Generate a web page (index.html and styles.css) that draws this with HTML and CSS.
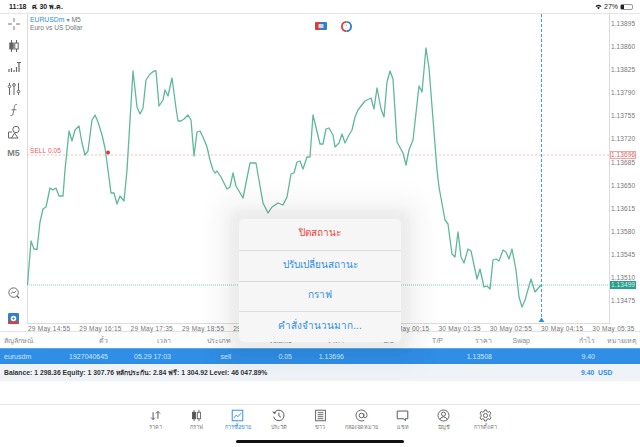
FILE: index.html
```html
<!DOCTYPE html>
<html lang="th">
<head>
<meta charset="utf-8">
<title>EURUSDm M5</title>
<link rel="stylesheet" href="styles.css">
</head>
<body>
<div class="app">
  <header class="status">
    <span class="status-time">11:18</span>
    <span class="status-date">ศ. 30 พ.ค.</span>
    <span class="status-right">
      <svg class="wifi" viewBox="0 0 8 6"><path d="M0.5 2Q4-1 7.500 2L6.500 3Q4 1 1.500 3ZM2.300 3.800Q4 2.400 5.700 3.800L4 5.500Z" fill="#222"/></svg>
      <span>27%</span>
      <span class="battery"><span class="battery-level"></span></span>
    </span>
  </header>

  <section class="workspace">
    <aside class="tools">
      <svg class="tool" viewBox="0 0 14 14" fill="none" stroke="#777" stroke-width="1"><path d="M7 1V5M7 9V13M1 7H5M9 7H13"/></svg>
      <svg class="tool" viewBox="0 0 14 14" fill="none" stroke="#666" stroke-width="1"><path d="M4.500 1V13M9.500 1V13"/><rect x="2.800" y="4" width="3.400" height="6" fill="#666"/><rect x="7.800" y="4" width="3.400" height="6" fill="#fff"/></svg>
      <svg class="tool" viewBox="0 0 14 14" fill="none" stroke="#666" stroke-width="1.200"><path d="M2 12V9M4.500 12V8M7 12V10M9.500 12V7M12 12V5M10 2.500H14M12 2.500V5"/></svg>
      <svg class="tool" viewBox="0 0 14 14" fill="none" stroke="#666" stroke-width="1"><path d="M2.500 1V13M7 1V13M11.500 1V13"/><circle cx="2.500" cy="4.500" r="1.300" fill="#fff"/><circle cx="7" cy="3" r="1.300" fill="#fff"/><circle cx="11.500" cy="9.500" r="1.300" fill="#fff"/></svg>
      <svg class="tool" viewBox="0 0 14 14" fill="none" stroke="#777" stroke-width="1"><path d="M10 1.500C7.500 1 7.500 3 7 6L6 11C5.700 12.800 4.500 13 3.500 12.500M4.500 6.800H9.500"/></svg>
      <svg class="tool" viewBox="0 0 14 14" fill="none" stroke="#666" stroke-width="1"><circle cx="9" cy="4.500" r="3.200"/><path d="M5 7H1.500V13H5M7.500 8L4.500 13H11Z"/></svg>
      <span class="tool-label">M5</span>
      <span class="tools-gap"></span>
      <svg class="tool-search" viewBox="0 0 14 14" fill="none" stroke="#555" stroke-width="1"><circle cx="6.500" cy="6.500" r="5.500"/><path d="M10.500 10.500L13 13" stroke-width="1.400"/><path d="M3.500 8L5.500 5.500L7 7L9.500 4.500" stroke-width=".9"/></svg>
      <svg class="tool-logo" viewBox="0 0 12 12"><rect width="12" height="12" rx="1.500" fill="#2f7fd0"/><path d="M0 9H3L6 6.500L9 9H12V10.500Q12 12 10.500 12H1.500Q0 12 0 10.500Z" fill="#d9403a"/><circle cx="6" cy="6" r="3" fill="#fff"/><path d="M6 4.500V7.500M4.500 6H7.500" stroke="#2f7fd0" stroke-width=".8"/></svg>
    </aside>

    <div class="chart">
      <div class="plot">
        <svg class="plot-svg" viewBox="27 14 583 310" preserveAspectRatio="none">
          <line class="sell-line" x1="27" y1="155" x2="609" y2="155"/>
          <line class="bid-line" x1="27" y1="285" x2="609" y2="285"/>
          <line class="cursor-line" x1="541.500" y1="14" x2="541.500" y2="322"/>
          <polyline class="price-line" points="27.500,285 31,241 34,249 37,249.500 40,222 43,209 46,207 50,188 53,190 56,188 59,196 63,196 65,170 69,131 72,141 75,130 79,126 82,143 85,155 88,151 92,120 95,115 98,122 102,135 105,148 108,170 111,193 114,193 117,204 120,196 124,201 127,170 133,71 137,107 140,114 143,108 146,80 150,74 154,71 156,71 159,106 163,100 165,90 168,96 172,78 176,108 178,121 181,121 184,119 188,115 191,120 194,156 197,132 200,131 203,137 207,147 210,160 213,170 215,173 217,171 221,177 227,189 230,187 233,173 236,186 243,198 250,163 253,163 256,163 263,203 268,213 272,207 278,203 283,205 287,197 291,174 294,173 297,162 300,161 303,169 307,157 310,157 313,115 320,144 323,144 326,129 329,128 333,135 335,147 339,143 342,134 345,143 349,135 352,130 355,117 358,110 365,101 371,98 374,109 377,88 381,109 384,117 387,82 390,71 393,79 397,142 403,153 406,165 409,150 413,140 419,86 422,92 426,48 429,68 437,170 439,187 445,220 448,224 452,254 455,257 458,232 461,257 464,263 468,249 471,251 477,279 480,269 484,287 487,286 490,289 493,260 496,259 499,261 503,250 506,252 509,259 512,249 516,270 519,297 522,307 525,300 531,279 535,292 541,285"/>
          <circle cx="108" cy="152.500" r="2" fill="#e0393a"/>
          <path d="M538.500 322L541.500 317.500L544.500 322Z" fill="#2f8ee6"/>
        </svg>
        <div class="symbol">
          <div class="symbol-name"><span class="symbol-code">EURUSDm</span><span class="symbol-drop">▾</span>M5</div>
          <div class="symbol-desc">Euro vs US Dollar</div>
        </div>
        <span class="sell-tag">SELL 0.05</span>
        <svg class="flag" viewBox="0 0 12 8"><rect width="6" height="8" rx="1" fill="#d9403a"/><rect x="5" width="7" height="8" rx="1" fill="#2f7fd0"/><rect x="3.500" y="2" width="5" height="4" fill="#cfd6de"/></svg>
        <svg class="ring" viewBox="0 0 12 12" fill="none" stroke-width="2"><path d="M6 1A5 5 0 0 0 6 11" stroke="#d9403a"/><path d="M6 1A5 5 0 0 1 6 11" stroke="#2f7fd0"/><path d="M6 3V6" stroke="#bbb" stroke-width=".7"/></svg>
      </div>
      <div class="time-axis">
        <span>29 May 14:55</span><span>29 May 16:15</span><span>29 May 17:35</span><span>29 May 18:55</span><span>29 May 20:15</span><span></span><span></span><span>30 May 00:15</span><span>30 May 01:35</span><span>30 May 02:55</span><span>30 May 04:15</span><span>30 May 05:35</span>
      </div>
      <div class="price-axis">
        <span>1.13895</span><span>1.13860</span><span>1.13825</span><span>1.13790</span><span>1.13755</span><span>1.13720</span><span>1.13685</span><span>1.13650</span><span>1.13615</span><span>1.13580</span><span>1.13545</span><span>1.13510</span><span>1.13475</span>
      </div>
      <span class="price-tag price-sell">1.13696</span>
      <span class="price-tag price-bid">1.13499</span>
    </div>
  </section>

  <section class="positions">
    <div class="row row-head">
      <span class="cell-first">สัญลักษณ์</span><span>ตั๋ว</span><span>เวลา</span><span>ประเภท</span><span>Volume</span><span>ราคา</span><span>S/L</span><span>T/P</span><span>ราคา</span><span>Swap</span><span>กำไร</span><span>หมายเหตุ</span>
    </div>
    <div class="row row-active">
      <span class="cell-first">eurusdm</span><span>1927040645</span><span>05.29 17:03</span><span>sell</span><span>0.05</span><span>1.13696</span><span></span><span></span><span>1.13508</span><span></span><span>9.40</span><span></span>
    </div>
    <div class="summary">
      <span>Balance: 1 298.36 Equity: 1 307.76 หลักประกัน: 2.84 ฟรี: 1 304.92 Level: 46 047.89%</span>
      <span class="summary-total">9.40&nbsp; USD</span>
    </div>
  </section>

  <nav class="tabs">
    <div class="tab"><svg viewBox="0 0 16 16" fill="none" stroke="#555" stroke-width="1.200"><path d="M5 4V13M2.500 10.500L5 13L7.500 10.500M11 12V3M8.500 5.500L11 3L13.500 5.500"/></svg><span>ราคา</span></div>
    <div class="tab"><svg viewBox="0 0 16 16" fill="none" stroke="#555" stroke-width="1"><path d="M5 1V15M11 1V15"/><rect x="3" y="4" width="4" height="8" fill="#555"/><rect x="9" y="4" width="4" height="8" fill="#fff"/></svg><span>กราฟ</span></div>
    <div class="tab tab-on"><svg viewBox="0 0 16 16" fill="none" stroke="#2f8ee6" stroke-width="1.200"><rect x="1.500" y="1.500" width="13" height="13"/><path d="M3.500 11L6.500 7.500L8.500 9.500L12.500 5"/></svg><span>การซื้อขาย</span></div>
    <div class="tab"><svg viewBox="0 0 16 16" fill="none" stroke="#555" stroke-width="1.200"><path d="M2.500 5A6.500 6.500 0 1 1 2 9.500"/><path d="M1 3L2.500 5.500L5 4.500M8.500 4.500V8.500L11 10"/></svg><span>ประวัติ</span></div>
    <div class="tab"><svg viewBox="0 0 16 16" fill="none" stroke="#555" stroke-width="1.100"><rect x="2" y="1.500" width="12" height="13"/><path d="M4.500 4.500H11.500M4.500 7H11.500M4.500 9.500H11.500M4.500 12H11.500"/></svg><span>ข่าว</span></div>
    <div class="tab"><svg viewBox="0 0 16 16" fill="none" stroke="#555" stroke-width="1.100"><circle cx="8" cy="8" r="2.800"/><path d="M10.800 5.500V9Q10.800 11 12.500 10.800Q14.800 10.500 14.800 8A6.800 6.800 0 1 0 11.500 13.800"/></svg><span>กล่องจดหมาย</span></div>
    <div class="tab"><svg viewBox="0 0 16 16" fill="none" stroke="#555" stroke-width="1.200"><path d="M1.500 2.500H14.500V12H11.500V14.500L9.500 12H1.500Z"/></svg><span>แชท</span></div>
    <div class="tab"><svg viewBox="0 0 16 16" fill="none" stroke="#555" stroke-width="1.100"><circle cx="8" cy="8" r="6.800"/><circle cx="8" cy="6.300" r="2.500"/><path d="M3.500 13Q4.500 9.800 8 9.800Q11.500 9.800 12.500 13"/></svg><span>บัญชี</span></div>
    <div class="tab"><svg viewBox="0 0 16 16" fill="none" stroke="#555" stroke-width="1.100"><path d="M6.800 1.200H9.200L9.700 3.200L11.500 4L13.300 3L14.800 5.500L13.300 6.800V9.200L14.800 10.500L13.300 13L11.500 12L9.700 12.800L9.200 14.800H6.800L6.300 12.800L4.500 12L2.700 13L1.200 10.500L2.700 9.200V6.800L1.200 5.500L2.700 3L4.500 4L6.300 3.200Z"/><circle cx="8" cy="8" r="2.500"/></svg><span>การตั้งค่า</span></div>
  </nav>

  <div class="home-bar"></div>

  <div class="menu">
    <div class="menu-item menu-danger">ปิดสถานะ</div>
    <div class="menu-item">ปรับเปลี่ยนสถานะ</div>
    <div class="menu-item">กราฟ</div>
    <div class="menu-item">คำสั่งจำนวนมาก...</div>
  </div>
</div>
</body>
</html>
```

FILE: styles.css
```css
* {
  box-sizing: border-box;
}

html,
body {
  margin: 0;
  height: 100%;
  background: #fff;
}

body {
  font-family: "Liberation Sans", "Noto Sans", "DejaVu Sans", sans-serif;
  overflow: hidden;
}

.app {
  position: relative;
  width: 640px;
  height: 447px;
  overflow: hidden;
  display: flex;
  flex-direction: column;
}

.status {
  height: 13px;
  display: flex;
  align-items: center;
  padding: 0 7px 0 9px;
  font-size: 7px;
  color: #222;
  font-weight: 700;
  gap: 5px;
  flex: none;
}

.status-right {
  margin-left: auto;
  display: flex;
  align-items: center;
  gap: 2px;
  font-weight: 400;
}

.wifi {
  width: 7px;
  height: 6px;
}

.battery {
  width: 13px;
  height: 6px;
  border: 1px solid #999;
  border-radius: 2px;
  display: block;
  padding: 0;
}

.battery-level {
  display: block;
  width: 3px;
  height: 4px;
  background: #222;
}

.workspace {
  display: flex;
  height: 319px;
  flex: none;
  border-top: 1px solid #e6e6e6;
  border-bottom: 1px solid #e4e4e4;
}

.tools {
  width: 27px;
  flex: none;
  display: flex;
  flex-direction: column;
  align-items: center;
  padding-top: 3px;
  gap: 7.500px;
}

.tool {
  width: 14px;
  height: 14px;
  flex: none;
}

.tool-label {
  font-size: 9px;
  font-weight: 700;
  color: #808080;
  line-height: 14px;
}

.tools-gap {
  flex: 1;
}

.tool-search {
  width: 12px;
  height: 12px;
  flex: none;
  margin-bottom: 7px;
}

.tool-logo {
  width: 11px;
  height: 11px;
  flex: none;
  margin-bottom: 7px;
}

.chart {
  position: relative;
  flex: 1;
}

.plot {
  position: absolute;
  left: 0;
  top: 0;
  width: 583px;
  height: 310px;
  border-left: 1px solid #dcdcdc;
  border-right: 1px solid #dcdcdc;
  border-bottom: 1px solid #dcdcdc;
}

.plot-svg {
  position: absolute;
  left: -1px;
  top: 0;
  width: 583px;
  height: 310px;
  overflow: visible;
}

.price-line {
  fill: none;
  stroke: #5fb89b;
  stroke-width: 1.300;
  stroke-linejoin: round;
}

.sell-line {
  stroke: #f5bdba;
  stroke-width: 1;
  stroke-dasharray: 2 2;
}

.bid-line {
  stroke: #7fd3ba;
  stroke-width: 1;
  stroke-dasharray: 1 1;
}

.cursor-line {
  stroke: #3d9bec;
  stroke-width: 1;
  stroke-dasharray: 3 2;
}

.symbol {
  position: absolute;
  left: 2px;
  top: 2px;
  font-size: 6.800px;
  line-height: 8px;
  color: #777;
}

.symbol-code {
  color: #2f8ee6;
}

.symbol-drop {
  color: #2f8ee6;
  font-size: 6px;
  margin: 0 2px;
}

.symbol-desc {
  font-size: 6.600px;
}

.sell-tag {
  position: absolute;
  left: 2px;
  top: 133px;
  font-size: 6.500px;
  letter-spacing: .1px;
  line-height: 8px;
  color: #e0605c;
}

.flag {
  position: absolute;
  left: 287px;
  top: 8px;
  width: 12px;
  height: 8px;
}

.ring {
  position: absolute;
  left: 313px;
  top: 7px;
  width: 11px;
  height: 11px;
}

.time-axis {
  position: absolute;
  left: 1px;
  top: 310px;
  display: grid;
  grid-template-columns: repeat(12, 51.300px);
  font-size: 6.500px;
  letter-spacing: .25px;
  line-height: 9px;
  color: #777;
  white-space: nowrap;
}

.price-axis {
  position: absolute;
  left: 584px;
  top: -2px;
  display: flex;
  flex-direction: column;
  font-size: 6.500px;
  letter-spacing: .1px;
  line-height: 23.100px;
  color: #777;
}

.price-tag {
  position: absolute;
  left: 583px;
  width: 26px;
  height: 8px;
  font-size: 6.500px;
  letter-spacing: .1px;
  padding-left: 0;
  white-space: nowrap;
  text-align: center;
}

.price-sell {
  top: 137px;
  border: 1px solid #eea5a2;
  color: #e0605c;
  background: #fff;
  line-height: 6px;
}

.price-bid {
  top: 267px;
  background: #2b9d8b;
  color: #d6f2ec;
  line-height: 8px;
}

.positions {
  flex: none;
}

.row {
  display: grid;
  grid-template-columns: 40px 64px 63px 60px 61px 52px 50px 49px 49px 38px 65px 42px;
  padding-left: 4px;
  height: 16px;
  align-items: center;
  font-size: 7px;
  white-space: nowrap;
  text-align: right;
}

.cell-first {
  text-align: left;
}

.row-head {
  color: #8a8a8a;
}

.row-active {
  background: #2f8ee6;
  color: #d0e6fa;
  border-top: 1px solid #59a9ef;
  height: 16px;
}

.summary {
  display: grid;
  grid-template-columns: 577px auto;
  align-items: center;
  padding-left: 4px;
  height: 17px;
  background: #eff3f8;
  font-size: 6.800px;
  font-weight: 700;
  color: #333;
  white-space: nowrap;
}

.summary-total {
  color: #2f8ee6;
}

.tabs {
  position: absolute;
  left: 0;
  top: 404px;
  width: 640px;
  height: 29px;
  border-top: 1px solid #e6e6e6;
  display: flex;
  justify-content: center;
  padding-top: 4px;
}

.tab {
  width: 41.250px;
  display: flex;
  flex-direction: column;
  align-items: center;
  font-size: 5.500px;
  color: #777;
  line-height: 8px;
  white-space: nowrap;
  gap: 1px;
}

.tab svg {
  width: 13px;
  height: 13px;
  flex: none;
}

.tab-on {
  color: #2f8ee6;
}

.home-bar {
  position: absolute;
  left: 236px;
  top: 440px;
  width: 168px;
  height: 3px;
  border-radius: 2px;
  background: #111;
}

.menu {
  position: absolute;
  left: 239px;
  top: 219px;
  width: 162px;
  height: 123px;
  background: #f6f6f7;
  border-radius: 5px;
  box-shadow: 0 0 8px 10px rgba(0, 0, 0, .04), 0 0 22px 24px rgba(0, 0, 0, .04);
  display: grid;
  grid-template-rows: repeat(4, 1fr);
}

.menu-item {
  display: flex;
  align-items: center;
  justify-content: center;
  font-size: 10px;
  color: #2f8ee6;
  border-top: 1px solid #dcdcdc;
  padding-bottom: 3px;
}

.menu-item:first-child {
  border-top: 0;
}

.menu-danger {
  color: #e8453c;
}
```
